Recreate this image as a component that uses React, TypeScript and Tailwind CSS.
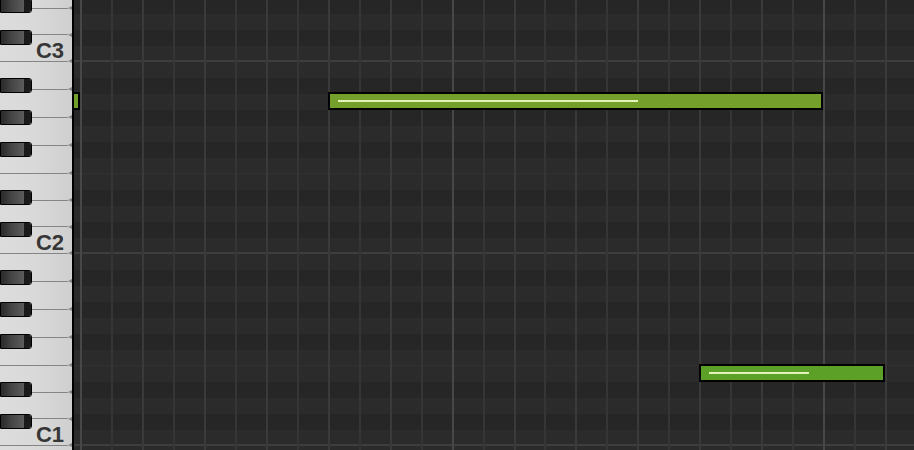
import React from 'react'

// semitone rows visible in the roll, top to bottom
const ROWS = [
  'D#3', 'D3', 'C#3', 'C3', 'B2', 'A#2', 'A2', 'G#2', 'G2', 'F#2', 'F2', 'E2',
  'D#2', 'D2', 'C#2', 'C2', 'B1', 'A#1', 'A1', 'G#1', 'G1', 'F#1', 'F1', 'E1',
  'D#1', 'D1', 'C#1', 'C1', 'B0',
]

const WHITE_KEYS = [
  'E3', 'D3', 'C3', 'B2', 'A2', 'G2', 'F2', 'E2', 'D2', 'C2',
  'B1', 'A1', 'G1', 'F1', 'E1', 'D1', 'C1', 'B0',
]

const COL_W = 30.94
const GRID_OFFSET = 6.4
const ROW_H = 16
const ROW_TOP = -2

interface Note {
  row: string
  start: number
  end: number
  color: string
  highlight: number
}

const NOTES: Note[] = [
  { row: 'A2', start: -1, end: 0, color: '#70a02a', highlight: 0 },
  { row: 'A2', start: 8, end: 24, color: '#739f2a', highlight: 300 },
  { row: 'E1', start: 20, end: 26, color: '#5ca028', highlight: 100 },
]

const isBlack = (name: string) => name.includes('#')

const WhiteKey: React.FC<{ name: string }> = ({ name }) => {
  const short = name[0] === 'C' || name[0] === 'D' || name[0] === 'E'
  return (
    <div className={`flex flex-col justify-end shrink-0 ${short ? 'h-[26.667px]' : 'h-[28px]'}`}>
      {name[0] === 'C' && (
        <span className="self-end pr-[8px] -mb-px text-[22px] leading-none font-bold text-[#363636] [font-family:'Liberation_Sans',Arial,sans-serif]">
          {name}
        </span>
      )}
      <div className="flex items-center h-px">
        <div className="flex-1 h-px bg-[#858585]" />
        <div className="w-0 h-0 border-y-[2.5px] border-y-transparent border-r-[4px] border-r-[#858585]" />
      </div>
    </div>
  )
}

const BlackKey = () => (
  <div className="flex h-[15px] w-[32px] border border-black rounded-r-[3px] overflow-hidden">
    <div className="flex-1 bg-gradient-to-r from-[#2a2a2a] via-[#474747] to-[#5c5c5c]" />
    <div className="w-[7px] bg-[#1a1a1a]" />
  </div>
)

const Keyboard = () => (
  <div className="relative w-[74px] h-[450px] shrink-0 overflow-hidden border-r-2 border-black bg-gradient-to-r from-[#dcdcdc] via-[#d9d9d9] to-[#cfcfcf]">
    <div className="flex flex-col -mt-[18px]">
      {WHITE_KEYS.map((k) => (
        <WhiteKey key={k} name={k} />
      ))}
    </div>
    <div className="absolute inset-0 flex flex-col -mt-[2px]">
      {ROWS.map((r) => (
        <div key={r} className="h-4 shrink-0">
          {isBlack(r) && <BlackKey />}
        </div>
      ))}
    </div>
  </div>
)

const lineClass = (k: number) => {
  if (k % 12 === 0) return 'border-l-[#474747]'
  if (k % 2 === 0) return 'border-l-[#3a3a3a]'
  return 'border-l-[#353535]'
}

const Grid = () => (
  <div className="relative flex-1 h-[450px] overflow-hidden bg-[#262626]">
    {/* rows */}
    <div className="flex flex-col -mt-[2px]">
      {ROWS.map((r) => (
        <div
          key={r}
          className={`h-4 shrink-0 ${isBlack(r) ? 'bg-[#262626]' : 'bg-[#2b2b2b]'} ${
            r[0] === 'C' && !isBlack(r)
              ? 'border-b-2 border-[#3e3e3e]'
              : r[0] === 'F' && !isBlack(r)
                ? 'border-b border-[#313131]'
                : ''
          }`}
        />
      ))}
    </div>

    {/* beat lines */}
    <div className="absolute inset-0 flex pl-[6.4px]">
      {Array.from({ length: 28 }, (_, k) => (
        <div key={k} className={`w-[30.94px] shrink-0 h-full border-l-2 ${lineClass(k)}`} />
      ))}
    </div>

    {/* notes */}
    {NOTES.map((n, i) => {
      const rowIdx = ROWS.indexOf(n.row)
      return (
        <div
          key={i}
          className="absolute h-[18px] border-2 border-black flex flex-col pt-[6px] pl-[8px]"
          style={{
            left: GRID_OFFSET + n.start * COL_W,
            width: (n.end - n.start) * COL_W,
            top: ROW_TOP + rowIdx * ROW_H - 2,
            backgroundColor: n.color,
          }}
        >
          {n.highlight > 0 && (
            <div className="h-[2px] bg-[#e2f2b8]" style={{ width: n.highlight }} />
          )}
        </div>
      )
    })}
  </div>
)

export default function App() {
  return (
    <div className="flex w-[914px] h-[450px] overflow-hidden bg-[#262626]">
      <Keyboard />
      <Grid />
    </div>
  )
}
